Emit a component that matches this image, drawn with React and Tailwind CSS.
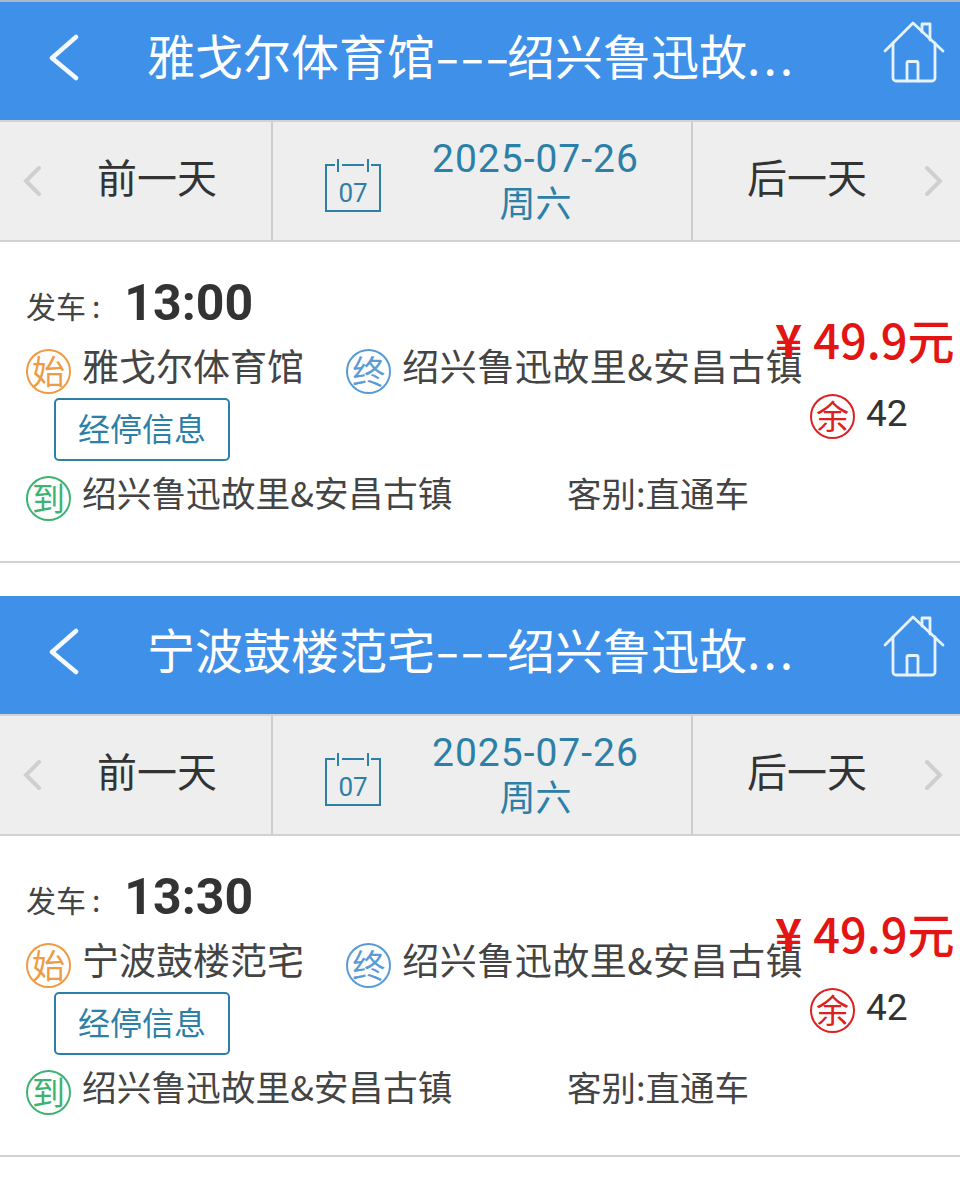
const CJK = "font-['Noto_Sans_CJK_SC','Noto_Sans',sans-serif]";

const tickets = [
  { title: "雅戈尔体育馆", time: "13:00", from: "雅戈尔体育馆" },
  { title: "宁波鼓楼范宅", time: "13:30", from: "宁波鼓楼范宅" },
];

function Stamp({ text, color }) {
  return (
    <span
      className={`flex h-[45px] w-[45px] shrink-0 items-center justify-center rounded-full border-2 pb-[2px] text-[33px] leading-none ${color}`}
    >
      {text}
    </span>
  );
}

function Chevron({ dir }) {
  return (
    <svg width="20" height="32" viewBox="0 0 20 32" fill="none" stroke="#cfcfcf" strokeWidth="4" strokeLinecap="round">
      <path d={dir === "left" ? "M17 3 L4 16 L17 29" : "M3 3 L16 16 L3 29"} />
    </svg>
  );
}

function HomeIcon() {
  return (
    <svg width="62" height="64" viewBox="0 0 62 64" fill="none" stroke="#e6f3fd" strokeWidth="2.8" strokeLinecap="round" strokeLinejoin="round">
      <path d="M2 30 L30 2 L60 30" />
      <path d="M39 11 V3 H47 V19" />
      <path d="M10 22 V57 a3 3 0 0 0 3 3 H49 a3 3 0 0 0 3 -3 V22" />
      <path d="M24 60 V42 a1.5 1.5 0 0 1 1.5 -1.5 H33.5 a1.5 1.5 0 0 1 1.5 1.5 V60" />
    </svg>
  );
}

function CalendarIcon() {
  return (
    <svg width="58" height="54" viewBox="0 0 58 54" fill="none" stroke="#2c80a8" strokeWidth="2">
      <path d="M11 7 H2 V53 H56 V7 H47" />
      <path d="M18 7 H40" />
      <path d="M14 1 V14 M44 1 V14" />
      <text x="29" y="44" textAnchor="middle" fontSize="26" fontFamily="Roboto, sans-serif" fill="#2c80a8" stroke="none">
        07
      </text>
    </svg>
  );
}

function TicketSection({ title, time, from }) {
  return (
    <section className="h-[594px]">
      <header className="flex h-[118px] items-center bg-[#3e90e9] pb-[6px] text-white">
        <svg className="ml-[48px] shrink-0" width="32" height="48" viewBox="0 0 32 48" fill="none" stroke="#f4faff" strokeWidth="4.5" strokeLinecap="round" strokeLinejoin="round">
          <path d="M28 3 L4 24 L28 44" />
        </svg>
        <h1 className="mb-[8px] ml-[67px] w-[738px] whitespace-nowrap text-[48px] leading-none font-normal">
          {title}
          <span className="inline-block w-[72px] origin-left scale-x-[1.5]">---</span>
          绍兴鲁迅故<span className="tracking-[3px]">...</span>
        </h1>
        <span className="mt-[-10px] ml-[-2px]">
          <HomeIcon />
        </span>
      </header>

      <nav className="grid h-[122px] grid-cols-[273px_420px_1fr] border-y-2 border-[#d2d2d2] bg-[#eeeeee]">
        <div className="flex items-center border-r-2 border-[#cdcdcd] pl-[22px]">
          <Chevron dir="left" />
          <span className="mb-[10px] ml-[55px] text-[40px] leading-none text-[#333333]">前一天</span>
        </div>
        <div className="flex items-center border-r-2 border-[#cdcdcd] pl-[51px]">
          <span className="mt-[8px]">
            <CalendarIcon />
          </span>
          <div className="ml-[50px] flex flex-col items-center text-[#2c80a8]">
            <span className="font-['Roboto',sans-serif] text-[39px] leading-[44px] tracking-[1px]">2025-07-26</span>
            <span className="mb-[3px] text-[36px] leading-[41px]">周六</span>
          </div>
        </div>
        <div className="flex items-center pl-[54px]">
          <span className="mb-[10px] text-[40px] leading-none text-[#333333]">后一天</span>
          <span className="ml-[57px]">
            <Chevron dir="right" />
          </span>
        </div>
      </nav>

      <div className="flex h-[321px] border-b-2 border-[#d2d2d2] pl-[26px] text-[#444444]">
        <div className="w-[777px] shrink-0 pt-[35px]">
          <div className="flex h-[56px] items-end">
            <span className="mb-[8px] text-[30px] leading-[40px]">
              发车<span className="ml-[6px]">:</span>
            </span>
            <span className="mb-[2px] ml-[24px] font-['Roboto',sans-serif] text-[50px] leading-[56px] font-bold text-[#333333]">{time}</span>
          </div>
          <div className="mt-[16px] flex h-[45px] items-center">
            <Stamp text="始" color="border-[#ef9a45] text-[#ef9a45]" />
            <span className="mb-[13px] ml-[11px] w-[265px] text-[37px] leading-none">{from}</span>
            <Stamp text="终" color="border-[#5b9bd5] text-[#5b9bd5]" />
            <span className="mb-[13px] ml-[11px] whitespace-nowrap text-[37px] leading-none tracking-[0.5px]">绍兴鲁迅故里&amp;安昌古镇</span>
          </div>
          <button className="mt-[4px] ml-[28px] flex h-[63px] w-[176px] items-center justify-center rounded-[5px] border-2 border-[#2c80a8] pb-[6px] text-[32px] leading-none text-[#2c80a8]">
            经停信息
          </button>
          <div className="mt-[15px] flex h-[45px] items-center">
            <Stamp text="到" color="border-[#3cb371] text-[#3cb371]" />
            <span className="mb-[13px] ml-[11px] w-[485px] whitespace-nowrap text-[34.7px] leading-none">绍兴鲁迅故里&amp;安昌古镇</span>
            <span className="mb-[13px] text-[34.5px] leading-none">客别:直通车</span>
          </div>
        </div>

        <div className="ml-[-28px] pt-[77px]">
          <div className="mt-[-4px] flex h-[46px] items-center whitespace-nowrap text-[47px] leading-none font-medium text-[#e31414]">
            <span className="text-[46px] font-bold">¥</span>
            <span className="ml-[11px]">49.9元</span>
          </div>
          <div className="mt-[33px] ml-[35px] flex h-[45px] items-center">
            <Stamp text="余" color="border-[#e02020] text-[#e02020]" />
            <span className="mb-[6px] ml-[11px] font-['Roboto',sans-serif] text-[37px] leading-none text-[#333333]">42</span>
          </div>
        </div>
      </div>
    </section>
  );
}

export default function App() {
  return (
    <div className={`h-[1190px] w-[960px] overflow-hidden border-t-2 border-[#a9b8c8] bg-white ${CJK}`}>
      {tickets.map((t) => (
        <TicketSection key={t.time} {...t} />
      ))}
    </div>
  );
}
